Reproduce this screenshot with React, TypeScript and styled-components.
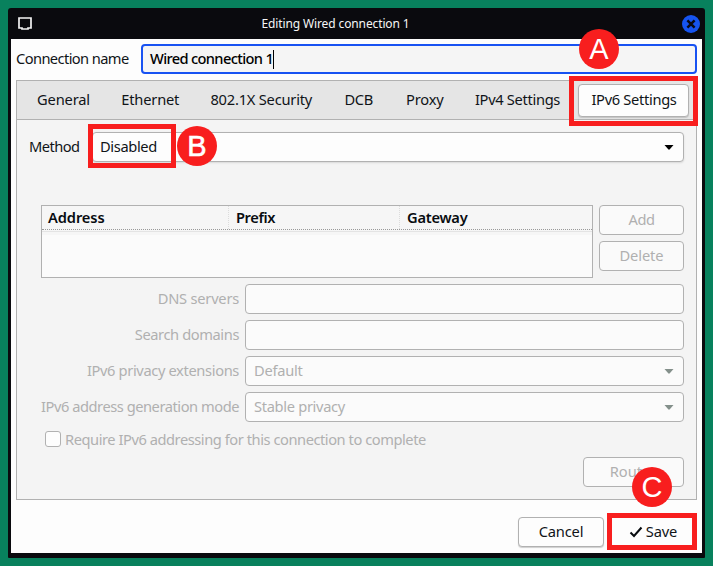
import React from 'react';
import styled, { createGlobalStyle, css } from 'styled-components';

const ink = '#101418';
const muted = '#b0b0b0';
const line = '#b1b1b1';
const red = '#f81e1e';
const blue = '#1852f2';

const GlobalStyle = createGlobalStyle`
  *, *::before, *::after { box-sizing: border-box; }
  body {
    margin: 0;
    background: #08815d;
    font-family: "Noto Sans", sans-serif;
    font-size: 14.67px;
    line-height: 20px;
    color: ${ink};
  }
`;

const Desktop = styled.main`
  position: relative;
  width: 713px;
  height: 566px;
  padding: 8px;
  overflow: hidden;
  background: #08815d;
`;

const Window = styled.section`
  display: flex;
  flex-direction: column;
  width: 697px;
  height: 550px;
  padding: 0 3px 5px;
  border-radius: 3px 3px 1px 1px;
  background: #0a0a0e;
`;

const TitleBar = styled.header`
  display: grid;
  grid-template-columns: 28px 1fr 28px;
  align-items: center;
  height: 31px;
  flex: none;
  color: #f6f6f6;
`;

const Title = styled.h1`
  margin: 0;
  padding-right: 42px;
  text-align: center;
  font-size: 12px;
  font-weight: 400;
  letter-spacing: -0.12px;
`;

const TitleIcon = styled.svg`
  display: block;
  margin-left: 7px;
`;

const CloseButton = styled.button`
  display: flex;
  width: 18px;
  height: 18px;
  margin: 1px 0 0 8px;
  padding: 0;
  border: 0;
  border-radius: 50%;
  background: #1654f0;
`;

const Body = styled.div`
  display: flex;
  flex-direction: column;
  flex: 1;
  padding: 5px 5px 6px;
  background: #fdfdfd;
`;

const Text = styled.span<{ $track?: number }>`
  padding-bottom: 2px;
  white-space: pre;
  letter-spacing: ${(p) => p.$track ?? 0}px;
`;

const NameRow = styled.label`
  display: flex;
  align-items: center;
  height: 30px;
`;

const NameCaption = styled(Text)`
  width: 125px;
`;

const NameField = styled.div`
  display: flex;
  align-items: center;
  flex: 1;
  height: 30px;
  padding-left: 7px;
  border: 2px solid ${blue};
  border-radius: 4px;
  background: #f5f5f5;
  font-weight: 500;
  color: #000;
`;

const Caret = styled.i`
  width: 1px;
  height: 19px;
  background: #000;
`;

const Notebook = styled.div`
  display: flex;
  flex-direction: column;
  height: 420px;
  width: 681px;
  margin-top: 6px;
  border: 1px solid ${line};
  background: #f4f4f4;
`;

const TabBar = styled.nav`
  display: flex;
  align-items: center;
  height: 39px;
  flex: none;
  padding-left: 4px;
  border-bottom: 1px solid ${line};
  background: #e5e5e5;
`;

const Tab = styled.div<{ $width: number; $active?: boolean }>`
  display: flex;
  align-items: center;
  justify-content: center;
  width: ${(p) => p.$width}px;
  height: 33px;
  flex: none;
  padding-left: 1px;
  ${(p) =>
    p.$active &&
    css`
      margin-left: 3px;
      border: 1px solid ${line};
      border-radius: 4px;
      background: #fdfdfd;
      box-shadow: 0 1px 1px #c4c4c4;
    `}
`;

const Page = styled.div`
  display: flex;
  flex-direction: column;
  padding: 12px 12px 0;
`;

const MethodRow = styled.div`
  display: flex;
  align-items: center;
  height: 30px;
`;

const MethodCaption = styled(Text)`
  width: 63px;
`;

const field = css`
  display: flex;
  align-items: center;
  height: 30px;
  border: 1px solid ${line};
  border-radius: 4px;
  background: #fdfdfd;
`;

const Combo = styled.div<{ $disabled?: boolean }>`
  ${field}
  flex: 1;
  justify-content: space-between;
  padding: 0 9px 0 ${(p) => (p.$disabled ? 8 : 7)}px;
  color: ${(p) => (p.$disabled ? muted : ink)};
  ${(p) =>
    p.$disabled
      ? css`
          background: #fbfbfb;
        `
      : css`
          box-shadow: 0 1px 2px #d8d8d8;
        `}
`;

const Entry = styled.div`
  ${field}
  background: #fbfbfb;
`;

const Button = styled.button<{ $width: number; $disabled?: boolean; $flat?: boolean }>`
  ${field}
  justify-content: center;
  width: ${(p) => p.$width}px;
  padding: 0;
  border-color: ${(p) => (p.$flat ? 'transparent' : line)};
  font: inherit;
  color: ${(p) => (p.$disabled ? muted : ink)};
  background: ${(p) => (p.$disabled ? '#fafafa' : '#fdfdfd')};
  box-shadow: ${(p) => (p.$disabled || p.$flat ? 'none' : '0 1px 1px #cfcfcf')};
`;

const AddressArea = styled.div`
  display: grid;
  grid-template-columns: 552px 85px;
  gap: 6px;
  margin: 43px 0 0 12px;
`;

const AddressTable = styled.div`
  height: 73px;
  border: 1px solid ${line};
  background: #fbfbfb;
`;

const TableHead = styled.div`
  display: grid;
  grid-template-columns: 186px 171px 1fr;
  height: 24px;
  border-bottom: 1px dotted #999;
  background: #f6f6f6;
  box-shadow: 0 1px 0 #f6f6f6, 0 2px 0 #e4e4e4, 0 5px 0 #f6f6f6;
`;

const HeadCell = styled.div`
  display: flex;
  align-items: center;
  padding-left: 6px;
  font-weight: 600;
  color: #080c10;
  & + & {
    padding-left: 7px;
    border-left: 1px dotted #dcdcdc;
  }
`;

const ButtonStack = styled.div`
  display: flex;
  flex-direction: column;
  gap: 6px;
`;

const Form = styled.div`
  display: grid;
  grid-template-columns: 198px 439px;
  gap: 6px;
  margin: 6px 0 0 12px;
  color: ${muted};
`;

const FormLabel = styled.div`
  display: flex;
  align-items: center;
  justify-content: flex-end;
`;

const CheckRow = styled.label`
  display: flex;
  align-items: center;
  gap: 4px;
  height: 16px;
  margin: 9px 0 0 16px;
  color: ${muted};
`;

const CheckBox = styled.span`
  width: 16px;
  height: 16px;
  border: 1px solid ${line};
  border-radius: 3px;
  background: #fdfdfd;
`;

const CheckCaption = styled(Text)`
  padding-bottom: 0;
`;

const RoutesRow = styled.div`
  display: flex;
  justify-content: flex-end;
  margin-top: 10px;
`;

const Actions = styled.footer`
  display: flex;
  justify-content: flex-end;
  gap: 6px;
  margin-top: 17px;
`;

const SaveLabel = styled.span`
  display: flex;
  align-items: center;
  gap: 3px;
  padding-right: 1px;
`;

/* Annotations that lie over the dialog */
const Highlight = styled.div<{ $x: number; $y: number; $w: number; $h: number }>`
  position: absolute;
  left: ${(p) => p.$x}px;
  top: ${(p) => p.$y}px;
  width: ${(p) => p.$w}px;
  height: ${(p) => p.$h}px;
  border: 5px solid ${red};
`;

const Marker = styled.div<{ $x: number; $y: number; $bold?: boolean }>`
  position: absolute;
  left: ${(p) => p.$x}px;
  top: ${(p) => p.$y}px;
  display: flex;
  align-items: center;
  justify-content: center;
  width: 40px;
  height: 40px;
  border-radius: 50%;
  background: ${red};
  color: #fff;
  font: 29px/40px "Liberation Sans", Arial, sans-serif;
  -webkit-text-stroke: ${(p) => (p.$bold ? 0.6 : 0)}px #fff;
`;

const Arrow = ({ color = '#000' }: { color?: string }) => (
  <svg width="10" height="5" viewBox="0 0 10 5">
    <path d="M0.5 0H9.5L5.8 4.3Q5 5 4.2 4.3Z" fill={color} />
  </svg>
);

const tabs = [
  { label: 'General', width: 84, track: -0.18 },
  { label: 'Ethernet', width: 89.5, track: -0.2 },
  { label: '802.1X Security', width: 132.5, track: -0.22 },
  { label: 'DCB', width: 62.5, track: -0.25 },
  { label: 'Proxy', width: 69.5, track: -0.2 },
  { label: 'IPv4 Settings', width: 116, track: -0.32 },
  { label: 'IPv6 Settings', width: 111, track: -0.32, active: true },
];

export default function App() {
  return (
    <>
      <GlobalStyle />
      <Desktop>
        <Window>
          <TitleBar>
            <TitleIcon width="14" height="13" viewBox="0 0 14 13">
              <path d="M1 1H13V11H10V12H4V11H1Z" fill="none" stroke="#f4f4f4" strokeWidth="1.7" />
            </TitleIcon>
            <Title>Editing Wired connection 1</Title>
            <CloseButton aria-label="Close">
              <svg width="18" height="18" viewBox="0 0 18 18">
                <path d="M5.4 5.4L12.6 12.6M12.6 5.4L5.4 12.6" stroke="#0a0a14" strokeWidth="2.5" />
              </svg>
            </CloseButton>
          </TitleBar>
          <Body>
            <NameRow>
              <NameCaption $track={-0.6}>Connection name</NameCaption>
              <NameField>
                <Text $track={-0.66}>Wired connection 1</Text>
                <Caret />
              </NameField>
            </NameRow>
            <Notebook>
              <TabBar>
                {tabs.map((t) => (
                  <Tab key={t.label} $width={t.width} $active={t.active}>
                    <Text $track={t.track}>{t.label}</Text>
                  </Tab>
                ))}
              </TabBar>
              <Page>
                <MethodRow>
                  <MethodCaption $track={-0.55}>Method</MethodCaption>
                  <Combo>
                    <Text $track={-0.36}>Disabled</Text>
                    <Arrow />
                  </Combo>
                </MethodRow>
                <AddressArea>
                  <AddressTable>
                    <TableHead>
                      <HeadCell><Text $track={-0.1}>Address</Text></HeadCell>
                      <HeadCell><Text $track={-0.4}>Prefix</Text></HeadCell>
                      <HeadCell><Text $track={-0.25}>Gateway</Text></HeadCell>
                    </TableHead>
                  </AddressTable>
                  <ButtonStack>
                    <Button $width={85} $disabled><Text $track={-0.5}>Add</Text></Button>
                    <Button $width={85} $disabled><Text $track={-0.1}>Delete</Text></Button>
                  </ButtonStack>
                </AddressArea>
                <Form>
                  <FormLabel><Text $track={-0.23}>DNS servers</Text></FormLabel>
                  <Entry />
                  <FormLabel><Text $track={-0.4}>Search domains</Text></FormLabel>
                  <Entry />
                  <FormLabel><Text $track={-0.36}>IPv6 privacy extensions</Text></FormLabel>
                  <Combo $disabled>
                    <Text $track={-0.25}>Default</Text>
                    <Arrow color="#84908b" />
                  </Combo>
                  <FormLabel><Text $track={-0.46}>IPv6 address generation mode</Text></FormLabel>
                  <Combo $disabled>
                    <Text $track={-0.32}>Stable privacy</Text>
                    <Arrow color="#84908b" />
                  </Combo>
                </Form>
                <CheckRow>
                  <CheckBox />
                  <CheckCaption $track={-0.45}>Require IPv6 addressing for this connection to complete</CheckCaption>
                </CheckRow>
                <RoutesRow>
                  <Button $width={101} $disabled><Text>Routes</Text></Button>
                </RoutesRow>
              </Page>
            </Notebook>
            <Actions>
              <Button $width={86}><Text $track={-0.15}>Cancel</Text></Button>
              <Button $width={87} $flat>
                <SaveLabel>
                  <svg width="14" height="12" viewBox="0 0 14 12">
                    <path d="M1.5 6.5L5 10L12.5 1.5" fill="none" stroke="#080c10" strokeWidth="2" />
                  </svg>
                  <Text $track={-0.1}>Save</Text>
                </SaveLabel>
              </Button>
            </Actions>
          </Body>
        </Window>
        <Highlight $x={569} $y={76} $w={129} $h={50} />
        <Marker $x={579} $y={29}>A</Marker>
        <Highlight $x={88} $y={124} $w={88} $h={44} />
        <Marker $x={177} $y={126} $bold>B</Marker>
        <Highlight $x={607} $y={513} $w={90} $h={37} />
        <Marker $x={632} $y={467}>C</Marker>
      </Desktop>
    </>
  );
}
